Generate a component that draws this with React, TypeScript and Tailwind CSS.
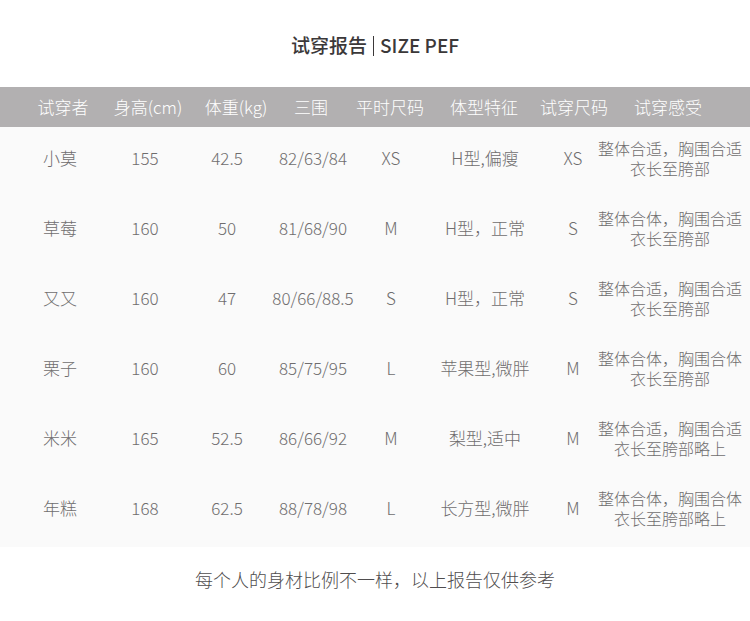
const rows = [
  { name: '小莫', h: '155', w: '42.5', bwh: '82/63/84', usual: 'XS', shape: 'H型,偏瘦', tried: 'XS', feel: ['整体合适，胸围合适', '衣长至胯部'] },
  { name: '草莓', h: '160', w: '50', bwh: '81/68/90', usual: 'M', shape: 'H型，正常', tried: 'S', feel: ['整体合体，胸围合适', '衣长至胯部'] },
  { name: '又又', h: '160', w: '47', bwh: '80/66/88.5', usual: 'S', shape: 'H型，正常', tried: 'S', feel: ['整体合适，胸围合适', '衣长至胯部'] },
  { name: '栗子', h: '160', w: '60', bwh: '85/75/95', usual: 'L', shape: '苹果型,微胖', tried: 'M', feel: ['整体合体，胸围合体', '衣长至胯部'] },
  { name: '米米', h: '165', w: '52.5', bwh: '86/66/92', usual: 'M', shape: '梨型,适中', tried: 'M', feel: ['整体合适，胸围合适', '衣长至胯部略上'] },
  { name: '年糕', h: '168', w: '62.5', bwh: '88/78/98', usual: 'L', shape: '长方型,微胖', tried: 'M', feel: ['整体合体，胸围合体', '衣长至胯部略上'] },
]

const headers = ['试穿者', '身高(cm)', '体重(kg)', '三围', '平时尺码', '体型特征', '试穿尺码', '试穿感受']

const cell = 'flex justify-center whitespace-nowrap'

export default function App() {
  return (
    <div className="w-[750px] h-[621px] bg-white overflow-hidden" style={{ fontFamily: '"Noto Sans CJK SC", "Noto Sans", sans-serif' }}>
      {/* Title */}
      <div className="h-[87px] flex items-center justify-center pt-[4px]">
        <div className="flex items-center text-[19px] font-medium text-[#3b3839]">
          <span>试穿报告</span>
          <span className="w-px h-[20px] bg-[#3b3839] mx-[6px]" />
          <span>SIZE PEF</span>
        </div>
      </div>

      {/* Header bar */}
      <div className="h-[40px] bg-[#b2b0b1] text-white text-[17px] font-light grid grid-cols-[106px_64px_112px_38px_120px_68px_112px_76px] pl-[10px] items-center">
        {headers.map(h => (
          <div key={h} className={cell}>{h}</div>
        ))}
      </div>

      {/* Body */}
      <div className="bg-[#fafafa]">
        {rows.map(r => (
          <div key={r.name} className="h-[70px] pb-[9px] grid grid-cols-[100px_70px_94px_78px_78px_110px_66px_128px] pl-[10px] items-center text-[17px] font-light text-[#6f6d6e]">
            <div className={cell}>{r.name}</div>
            <div className={cell}>{r.h}</div>
            <div className={cell}>{r.w}</div>
            <div className={cell}>{r.bwh}</div>
            <div className={cell}>{r.usual}</div>
            <div className={cell}>{r.shape}</div>
            <div className={cell}>{r.tried}</div>
            <div className="flex flex-col items-center text-[16px] leading-[20px] whitespace-nowrap">
              <span>{r.feel[0]}</span>
              <span>{r.feel[1]}</span>
            </div>
          </div>
        ))}
      </div>

      {/* Footer */}
      <div className="h-[66px] flex items-center justify-center pb-[2px] text-[18px] font-light text-[#4f4d4e]">
        每个人的身材比例不一样，以上报告仅供参考
      </div>
    </div>
  )
}
